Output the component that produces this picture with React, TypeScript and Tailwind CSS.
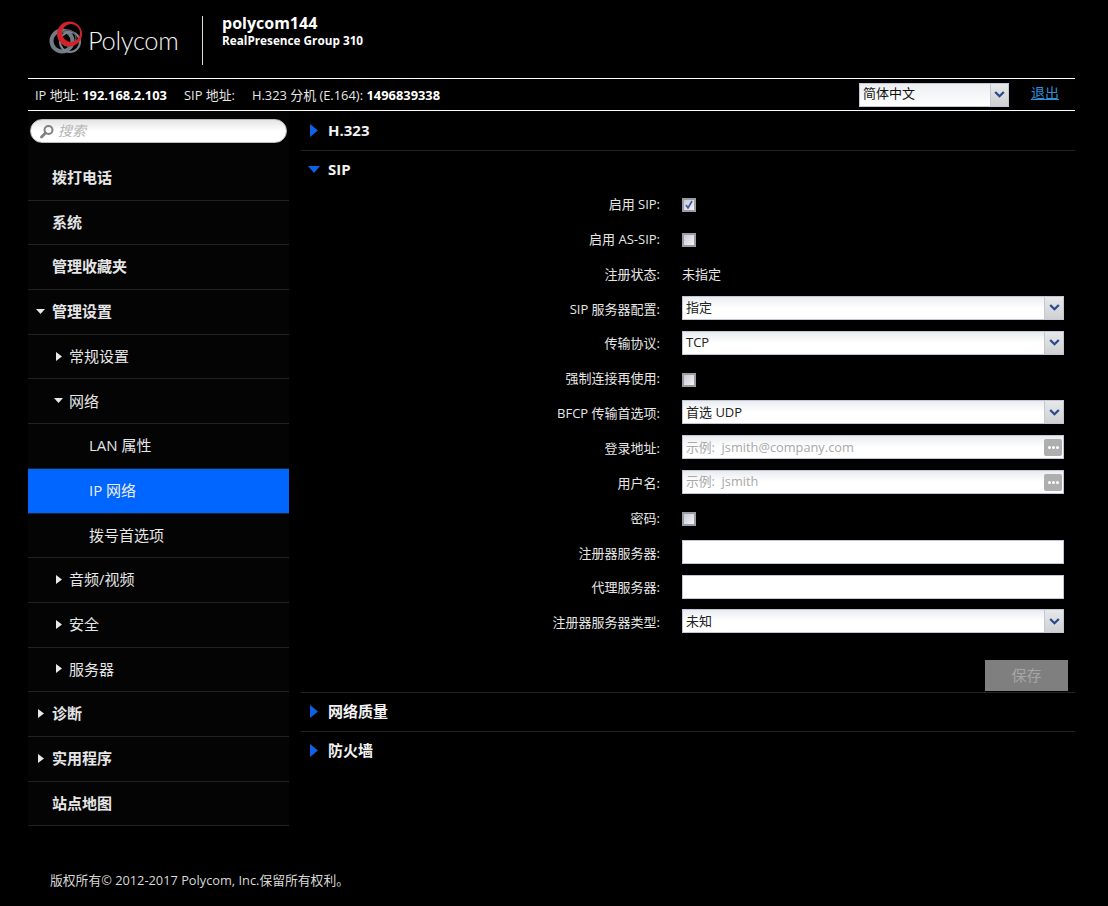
import { ReactNode } from 'react'

const FONT = "font-['Open_Sans','Noto_Sans_CJK_SC',sans-serif]"

type NavItem = {
  label: string
  depth: 0 | 1 | 2
  arrow?: 'right' | 'down'
  active?: boolean
}

const navItems: NavItem[] = [
  { label: '拨打电话', depth: 0 },
  { label: '系统', depth: 0 },
  { label: '管理收藏夹', depth: 0 },
  { label: '管理设置', depth: 0, arrow: 'down' },
  { label: '常规设置', depth: 1, arrow: 'right' },
  { label: '网络', depth: 1, arrow: 'down' },
  { label: 'LAN 属性', depth: 2 },
  { label: 'IP 网络', depth: 2, active: true },
  { label: '拨号首选项', depth: 2 },
  { label: '音频/视频', depth: 1, arrow: 'right' },
  { label: '安全', depth: 1, arrow: 'right' },
  { label: '服务器', depth: 1, arrow: 'right' },
  { label: '诊断', depth: 0, arrow: 'right' },
  { label: '实用程序', depth: 0, arrow: 'right' },
  { label: '站点地图', depth: 0 },
]

function Logo() {
  return (
    <div className="flex items-center">
      <svg width="40" height="38" viewBox="0 0 40 38">
        <circle cx="13" cy="20" r="10.5" fill="none" stroke="#727c85" strokeWidth="4" />
        <circle cx="21" cy="21" r="10" fill="none" stroke="#7d858c" strokeWidth="2" />
        <circle cx="19" cy="17" r="8" fill="none" stroke="#555b61" strokeWidth="1.3" />
        <path
          fillRule="evenodd"
          d="M8 13a12.5 12.5 0 1 0 25 0a12.5 12.5 0 1 0 -25 0ZM13 12a9 9 0 1 1 18 0a9 9 0 1 1 -18 0Z"
          fill="#d3222a"
        />
      </svg>
      <span className="ml-[-1px] font-['Lato',sans-serif] text-[25.5px] font-light tracking-[-0.35px] text-[#f2f2f2]">
        Polycom
      </span>
    </div>
  )
}

function Triangle({ dir, white }: { dir: 'right' | 'down'; white?: boolean }) {
  const color = white ? '#e8e8e8' : '#0f62e6'
  if (dir === 'right') {
    return white ? (
      <svg width="6" height="9" viewBox="0 0 6 9">
        <path d="M0 0L6 4.5L0 9Z" fill={color} />
      </svg>
    ) : (
      <svg width="8" height="13" viewBox="0 0 8 13">
        <path d="M0 0L8 6.5L0 13Z" fill={color} />
      </svg>
    )
  }
  return white ? (
    <svg width="9" height="5" viewBox="0 0 9 5">
      <path d="M0 0H9L4.5 5Z" fill={color} />
    </svg>
  ) : (
    <svg width="12" height="7" viewBox="0 0 12 7">
      <path d="M0 0H12L6 7Z" fill={color} />
    </svg>
  )
}

function Sidebar() {
  return (
    <aside className="w-[261px] shrink-0 bg-[#040404]">
      <div className="flex h-[45px] items-start px-[2px] pt-[8px]">
        <div className="flex h-[24px] w-[257px] items-center rounded-full border border-[#bbb] bg-gradient-to-b from-[#e4e4e4] via-white to-white pl-[8px]">
          <svg width="15" height="15" viewBox="0 0 15 15">
            <circle cx="9.5" cy="6" r="4" fill="none" stroke="#808080" strokeWidth="2" />
            <path d="M6.5 9L2.5 13" stroke="#808080" strokeWidth="2.8" strokeLinecap="round" />
          </svg>
          <span className="mb-[2px] ml-[4px] text-[14px] italic text-[#b5b5b5]">搜索</span>
        </div>
      </div>
      {navItems.map(item => (
        <div
          key={item.label}
          className={`relative flex h-[44.7px] items-center border-b border-[#222] pb-[1px] text-[15px] ${
            item.active ? 'bg-[#0066ff] text-[#eee]' : 'text-[#e6e6e6]'
          } ${item.depth === 0 ? 'pl-[24px] font-bold' : item.depth === 1 ? 'pl-[41px]' : 'pl-[61px]'}`}
        >
          {item.arrow && (
            <span
              className={`absolute flex items-center ${
                item.depth === 0
                  ? item.arrow === 'down'
                    ? 'left-[8px]'
                    : 'left-[10px]'
                  : item.arrow === 'down'
                    ? 'left-[26px]'
                    : 'left-[28px]'
              }`}
            >
              <Triangle dir={item.arrow} white />
            </span>
          )}
          {item.label}
        </div>
      ))}
    </aside>
  )
}

function SectionHeader({ label, open, className }: { label: string; open?: boolean; className: string }) {
  return (
    <div className={`flex items-center text-[15px] font-bold text-[#f2f2f2] ${className}`}>
      <span className="flex w-[27px] justify-center pr-[1px]">
        <Triangle dir={open ? 'down' : 'right'} />
      </span>
      {label}
    </div>
  )
}

function Checkbox({ checked }: { checked?: boolean }) {
  return (
    <span className="mt-[1px] flex h-[14px] w-[14px] items-center justify-center border-2 border-[#9a9ca2] bg-gradient-to-br from-[#c8cad4] to-[#f4f4f6]">
      {checked && (
        <svg width="10" height="10" viewBox="0 0 10 10">
          <path d="M2 5L4 8L8 1" fill="none" stroke="#4058a8" strokeWidth="1.7" />
        </svg>
      )}
    </span>
  )
}

function Shell({ children }: { children: ReactNode }) {
  return (
    <div className="mb-[3px] flex h-[24px] w-[382px] items-center border border-[#c2c6d6] bg-gradient-to-b from-[#e9ecef] via-white to-white text-[13px] text-[#222]">
      {children}
    </div>
  )
}

function Chevron() {
  return (
    <svg width="11" height="7" viewBox="0 0 11 7">
      <path d="M1.2 1L5.5 5.2L9.8 1" fill="none" stroke="#2a4a8c" strokeWidth="2.3" />
    </svg>
  )
}

function SelectBox({ value }: { value: string }) {
  return (
    <Shell>
      <span className="flex-1 pl-[3px]">{value}</span>
      <span className="flex h-full w-[19px] items-center justify-center border-l border-[#c2c6d6] bg-gradient-to-b from-[#e6e8ea] to-[#cfd0d2]">
        <Chevron />
      </span>
    </Shell>
  )
}

function HintBox({ hint }: { hint: string }) {
  return (
    <Shell>
      <span className="flex-1 whitespace-pre pl-[3px] text-[12.8px] text-[#a8a8a8]">{hint}</span>
      <span className="mr-[1px] flex h-[17px] w-[18px] items-center justify-center gap-[1px] rounded-[2px] bg-[#aeaeae]">
        <i className="h-[3px] w-[3px] rounded-full bg-white" />
        <i className="h-[3px] w-[3px] rounded-full bg-white" />
        <i className="h-[3px] w-[3px] rounded-full bg-white" />
      </span>
    </Shell>
  )
}

function PlainInput() {
  return <div className="mb-[3px] h-[24px] w-[382px] border border-[#c2c6d6] bg-white" />
}

const formRows: { label: string; control: ReactNode }[] = [
  { label: '启用 SIP:', control: <Checkbox checked /> },
  { label: '启用 AS-SIP:', control: <Checkbox /> },
  { label: '注册状态:', control: <span className="text-[13px] text-[#e6e6e6]">未指定</span> },
  { label: 'SIP 服务器配置:', control: <SelectBox value="指定" /> },
  { label: '传输协议:', control: <SelectBox value="TCP" /> },
  { label: '强制连接再使用:', control: <Checkbox /> },
  { label: 'BFCP 传输首选项:', control: <SelectBox value="首选 UDP" /> },
  { label: '登录地址:', control: <HintBox hint="示例:  jsmith@company.com" /> },
  { label: '用户名:', control: <HintBox hint="示例:  jsmith" /> },
  { label: '密码:', control: <Checkbox /> },
  { label: '注册器服务器:', control: <PlainInput /> },
  { label: '代理服务器:', control: <PlainInput /> },
  { label: '注册器服务器类型:', control: <SelectBox value="未知" /> },
]

function SipForm() {
  return (
    <div className="pt-[0.4px]">
      {formRows.map(row => (
        <div key={row.label} className="flex h-[34.85px] items-center">
          <span className="w-[359px] text-right text-[13px] text-[#e6e6e6]">{row.label}</span>
          <span className="ml-[22px] flex items-center">{row.control}</span>
        </div>
      ))}
      <div className="mt-[19.6px] flex h-[33px] justify-end border-b border-[#222] pb-[1px] pr-[7px]">
        <button className="h-[31px] w-[83px] bg-[#7f7f7f] text-[15px] text-[#a6a6a6]">保存</button>
      </div>
    </div>
  )
}

export default function App() {
  return (
    <div className={`min-h-[906px] bg-black px-[28px] pr-[33px] ${FONT}`}>
      {/* Top bar */}
      <header className="flex h-[78px] items-center pl-[21px]">
        <div className="mt-[2px] w-[153px]">
          <Logo />
        </div>
        <div className="mb-[-3px] h-[49px] w-px bg-[#ddd]" />
        <div className="mb-[18px] ml-[19px] text-white">
          <div className="text-[16px] font-bold leading-[19px]">polycom144</div>
          <div className="text-[11.75px] font-bold leading-[14px]">RealPresence Group 310</div>
        </div>
      </header>

      {/* Address line */}
      <div className="flex h-[33px] items-center border-y border-white pl-[7px] text-[12.9px] text-[#e6e6e6]">
        <span className="pt-[2px]">
          IP 地址: <b className="text-white">192.168.2.103</b>
        </span>
        <span className="ml-[17px] pt-[2px]">SIP 地址:</span>
        <span className="ml-[17px] pt-[2px]">
          H.323 分机 (E.164): <b className="text-white">1496839338</b>
        </span>
        <div className="ml-auto flex h-[24px] w-[150px] items-center border border-[#c2c6d6] bg-gradient-to-b from-[#eceef0] to-white pb-[2px] text-[13px] text-[#111]">
          <span className="flex-1 pl-[3px]">简体中文</span>
          <span className="mb-[-2px] flex h-[22px] w-[18px] items-center justify-center border-l border-[#c2c6d6] bg-gradient-to-b from-[#e6e8ea] to-[#cfd0d2]">
            <Chevron />
          </span>
        </div>
        <a className="mb-[5px] ml-[22px] mr-[16px] text-[14px] text-[#2f8fd8] underline">退出</a>
      </div>

      <div className="flex">
        <Sidebar />
        <main className="ml-[12px] flex-1">
          <SectionHeader label="H.323" className="h-[40px] border-b border-[#222] pb-[1px]" />
          <SectionHeader label="SIP" open className="h-[36px]" />
          <SipForm />
          <SectionHeader label="网络质量" className="h-[39px] border-b border-[#222] pb-[1px]" />
          <SectionHeader label="防火墙" className="h-[39px] pb-[2px]" />
        </main>
      </div>

      <footer className="mt-[45px] pl-[22px] text-[12.8px] leading-[18px] text-[#d8d8d8]">
        版权所有© 2012-2017 Polycom, Inc.保留所有权利。
      </footer>
    </div>
  )
}
